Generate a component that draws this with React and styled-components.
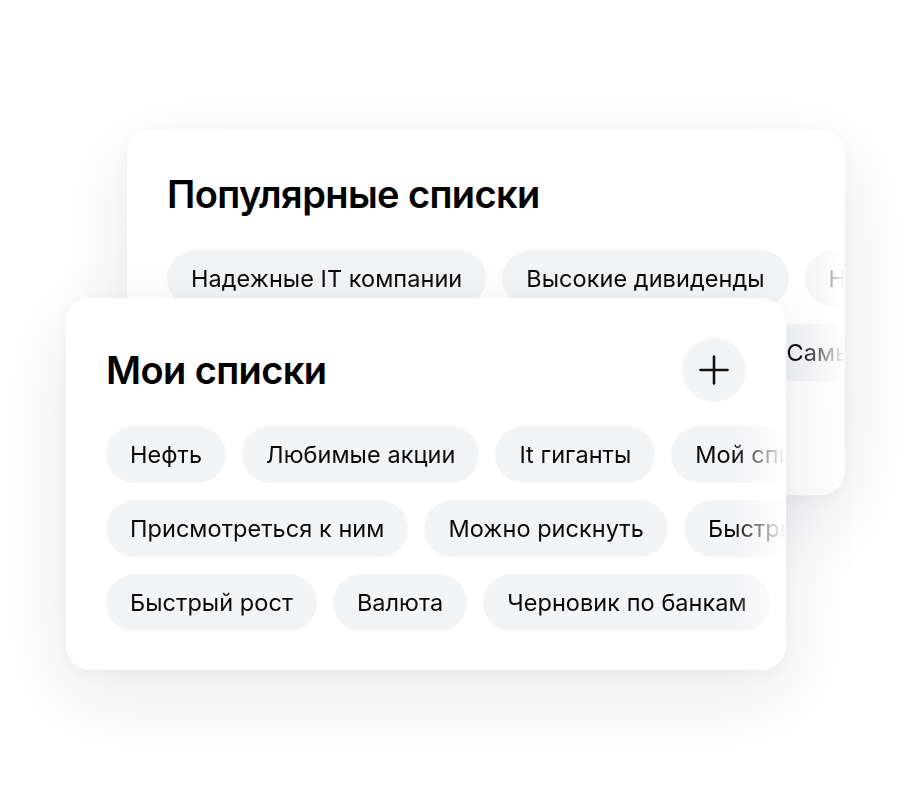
import React from 'react';
import styled, { createGlobalStyle } from 'styled-components';

const GlobalStyle = createGlobalStyle`
  body {
    margin: 0;
    background: #ffffff;
    font-family: Inter, "Noto Sans", "Liberation Sans", sans-serif;
    color: #000;
  }
`;

const Stage = styled.div`
  width: 912px;
  height: 800px;
  display: grid;
  grid-template: 1fr / 1fr;
  overflow: hidden;
`;

// both cards share one grid cell, the later one lies over the earlier one
const Card = styled.section`
  grid-area: 1 / 1;
  z-index: ${p => p.$layer};
  align-self: start;
  justify-self: start;
  margin-left: ${p => p.$left}px;
  margin-top: ${p => p.$top}px;
  width: ${p => p.$width}px;
  height: ${p => p.$height}px;
  box-sizing: border-box;
  padding: 40px;
  background: #fff;
  border-radius: 24px;
  box-shadow: 0 24px 80px rgba(20, 24, 40, 0.09), 0 4px 16px rgba(20, 24, 40, 0.03);
  display: flex;
  flex-direction: column;
  overflow: hidden;
  isolation: isolate;
`;

const Header = styled.div`
  display: flex;
  align-items: center;
  justify-content: space-between;
  min-height: ${p => p.$height}px;
  margin-bottom: ${p => p.$gap}px;
`;

const Title = styled.h2`
  margin: 0;
  font-size: 38px;
  line-height: 48px;
  font-weight: 600;
  letter-spacing: -0.6px;
`;

const AddButton = styled.button`
  width: 64px;
  height: 64px;
  border: none;
  border-radius: 50%;
  background: #f3f4f6;
  display: flex;
  align-items: center;
  justify-content: center;
  padding: 0;
  cursor: pointer;
`;

const Chips = styled.div`
  margin-right: -40px;
  display: flex;
  flex-direction: column;
  gap: 17px;
  overflow: hidden;
  -webkit-mask-image: linear-gradient(to right, #000 0, #000 calc(100% - ${p => p.$fade}px), transparent 100%);
  mask-image: linear-gradient(to right, #000 0, #000 calc(100% - ${p => p.$fade}px), transparent 100%);
`;

const Row = styled.div`
  display: flex;
  gap: 16px;
  flex-wrap: nowrap;
`;

const Chip = styled.span`
  flex: none;
  height: 57px;
  box-sizing: border-box;
  padding: 0 24px;
  display: flex;
  align-items: center;
  border-radius: 29px;
  background: #f3f4f6;
  font-size: 23.5px;
  font-weight: 400;
  letter-spacing: 0.05px;
  white-space: nowrap;
  color: #0b0b0c;
`;

const PlusIcon = () => (
  <svg width="30" height="30" viewBox="0 0 30 30" fill="none">
    <path d="M15 1.5v27M1.5 15h27" stroke="#111" strokeWidth="2.6" strokeLinecap="round" />
  </svg>
);

const popular = [
  ['Надежные IT компании', 'Высокие дивиденды', 'Нефть и газ'],
  ['Голубые фишки', 'Бумаги с низким долгом', 'Самые популярные'],
  ['Облигации', 'Технологии будущего'],
];

const mine = [
  ['Нефть', 'Любимые акции', 'It гиганты', 'Мой список'],
  ['Присмотреться к ним', 'Можно рискнуть', 'Быстрые деньги'],
  ['Быстрый рост', 'Валюта', 'Черновик по банкам'],
];

function ChipList({ rows, fade }) {
  return (
    <Chips $fade={fade}>
      {rows.map((row, i) => (
        <Row key={i}>
          {row.map(name => <Chip key={name}>{name}</Chip>)}
        </Row>
      ))}
    </Chips>
  );
}

export default function App() {
  return (
    <>
      <GlobalStyle />
      <Stage>
        <Card $layer={1} $left={127} $top={130} $width={718} $height={365}>
          <Header $height={48} $gap={32}>
            <Title>Популярные списки</Title>
          </Header>
          <ChipList rows={popular} fade={44} />
        </Card>
        <Card $layer={2} $left={66} $top={298} $width={720} $height={372}>
          <Header $height={64} $gap={24}>
            <Title>Мои списки</Title>
            <AddButton aria-label="Добавить список">
              <PlusIcon />
            </AddButton>
          </Header>
          <ChipList rows={mine} fade={52} />
        </Card>
      </Stage>
    </>
  );
}
